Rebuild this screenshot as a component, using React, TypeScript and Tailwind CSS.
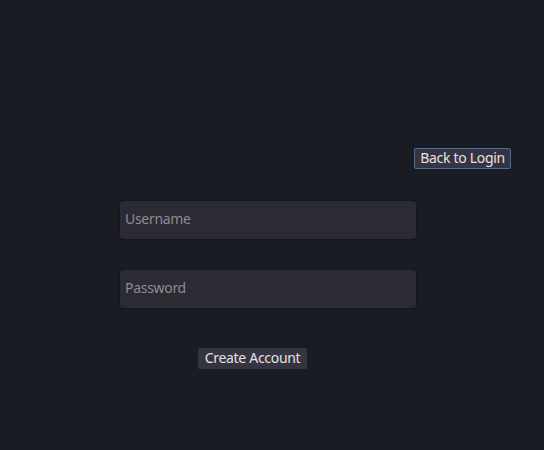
export default function App() {
  return (
    <div
      className="w-[544px] h-[450px] bg-[#1a1c24] flex flex-col text-[14px] tracking-[-0.3px]"
      style={{ fontFamily: '"Noto Sans", "Open Sans", sans-serif' }}
    >
      <div className="flex justify-end pt-[148px] pr-[33px]">
        <button className="h-[21px] w-[97px] rounded-[2px] bg-[#363441] border border-[#526c8b] text-[#e2e2e4] leading-none flex items-center justify-center pb-[1px]">
          Back to Login
        </button>
      </div>

      <div className="mt-[32px] ml-[120px] w-[296px] h-[38px] rounded-[3px] bg-[#2c2a33] shadow-[0_0_2px_rgba(0,0,0,0.5)] flex items-center px-[5px] pb-[3px]">
        <span className="text-[#8e8c95]">Username</span>
      </div>

      <div className="mt-[31px] ml-[120px] w-[296px] h-[38px] rounded-[3px] bg-[#2c2a33] shadow-[0_0_2px_rgba(0,0,0,0.5)] flex items-center px-[5px] pb-[3px]">
        <span className="text-[#8e8c95]">Password</span>
      </div>

      <div className="mt-[40px] ml-[198px]">
        <button className="h-[21px] w-[109px] rounded-[2px] bg-[#363441] text-[#e2e2e4] leading-none flex items-center justify-center pb-[1px]">
          Create Account
        </button>
      </div>
    </div>
  )
}
